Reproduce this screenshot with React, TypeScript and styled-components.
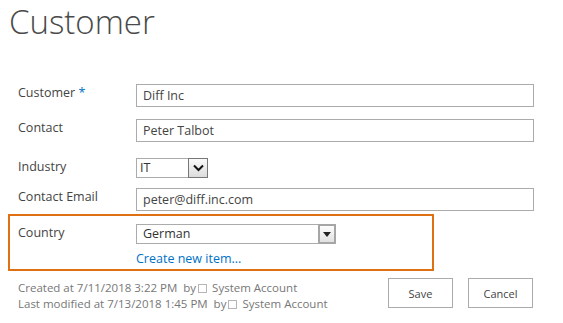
import styled, { createGlobalStyle } from 'styled-components';

const GlobalStyle = createGlobalStyle`
  body {
    margin: 0;
    background: #fff;
    font-family: 'Open Sans', 'Liberation Sans', sans-serif;
  }
`;

const Page = styled.div`
  width: 563px;
  height: 323px;
  overflow: hidden;
`;

const Title = styled.h1`
  margin: 0;
  padding: 0 0 0 9px;
  font-size: 33px;
  font-weight: 300;
  line-height: 44px;
  color: #4a4a4a;
`;

const Form = styled.div`
  padding-top: 40px;
`;

const Row = styled.div<{ gap?: number }>`
  display: flex;
  align-items: flex-start;
  padding-left: 18px;
  margin-bottom: ${(p) => p.gap ?? 12}px;
`;

const Label = styled.div`
  width: 118px;
  flex-shrink: 0;
  font-size: 12.5px;
  line-height: 18px;
  color: #444;
`;

const Star = styled.span`
  color: #0072c6;
`;

const TextBox = styled.div`
  box-sizing: border-box;
  width: 398px;
  height: 23px;
  border: 1px solid #ababab;
  padding: 0 6px;
  font-size: 12.5px;
  line-height: 21px;
  color: #444;
`;

const Select = styled.div<{ w: number }>`
  display: flex;
  box-sizing: border-box;
  width: ${(p) => p.w}px;
  height: 20px;
  border: 1px solid #ababab;
  font-size: 12.5px;
  line-height: 18px;
  color: #333;
`;

const SelectValue = styled.div<{ inset?: number }>`
  flex: 1;
  padding-left: ${(p) => p.inset ?? 3}px;
`;

const ClassicArrow = styled.div`
  box-sizing: border-box;
  width: 20px;
  height: 20px;
  margin: -1px -1px 0 0;
  border: 1px solid #777;
  background: linear-gradient(#fafafa, #dcdcdc);
  display: flex;
  align-items: center;
  justify-content: center;
`;

const DropArrow = styled.div`
  box-sizing: border-box;
  width: 18px;
  height: 20px;
  margin: -1px -1px 0 0;
  border: 2px solid #a6a6a6;
  background: linear-gradient(#fdfdfd, #e1e1e1);
  display: flex;
  align-items: center;
  justify-content: center;
`;

const Highlight = styled.div`
  box-sizing: border-box;
  width: 426px;
  height: 57px;
  margin-left: 8px;
  border: 2px solid #e07014;
  padding: 8px 0 0 8px;
  display: flex;
`;

const Stack = styled.div`
  display: flex;
  flex-direction: column;
`;

const Link = styled.a`
  margin-top: 6px;
  font-size: 12.5px;
  line-height: 17px;
  color: #0072c6;
  text-decoration: none;
`;

const Footer = styled.div`
  display: flex;
  justify-content: space-between;
  align-items: flex-start;
  padding: 7px 30px 0 18px;
`;

const Meta = styled.div`
  font-size: 11.5px;
  line-height: 16px;
  color: #777;
  padding-top: 2px;
`;

const Presence = styled.span`
  display: inline-block;
  box-sizing: border-box;
  width: 9px;
  height: 9px;
  margin: 0 5px 0 2px;
  border: 1px solid #b5b5b5;
  vertical-align: -1px;
`;

const Buttons = styled.div`
  display: flex;
  gap: 15px;
`;

const Button = styled.button`
  box-sizing: border-box;
  width: 65px;
  height: 30px;
  border: 1px solid #ababab;
  background: #fff;
  font-family: inherit;
  font-size: 11px;
  color: #444;
  padding: 0;
`;

export default function App() {
  return (
    <Page>
      <GlobalStyle />
      <Title>Customer</Title>
      <Form>
        <Row>
          <Label>
            Customer <Star>*</Star>
          </Label>
          <TextBox>Diff Inc</TextBox>
        </Row>
        <Row gap={16}>
          <Label>Contact</Label>
          <TextBox>Peter Talbot</TextBox>
        </Row>
        <Row gap={10}>
          <Label>Industry</Label>
          <Select w={72}>
            <SelectValue>IT</SelectValue>
            <ClassicArrow>
              <svg width="11" height="8" viewBox="0 0 11 8">
                <path d="M1 1.5 L5.5 6 L10 1.5" fill="none" stroke="#111" strokeWidth="2" />
              </svg>
            </ClassicArrow>
          </Select>
        </Row>
        <Row gap={3}>
          <Label>Contact Email</Label>
          <TextBox>peter@diff.inc.com</TextBox>
        </Row>
        <Highlight>
          <Label>Country</Label>
          <Stack>
            <Select w={200}>
              <SelectValue inset={6}>German</SelectValue>
              <DropArrow>
                <svg width="8" height="5" viewBox="0 0 8 5">
                  <path d="M0 0 H8 L4 5 Z" fill="#222" />
                </svg>
              </DropArrow>
            </Select>
            <Link href="#">Create new item...</Link>
          </Stack>
        </Highlight>
        <Footer>
          <Meta>
            <div>
              Created at 7/11/2018 3:22 PM&nbsp; by<Presence />
              System Account
            </div>
            <div>
              Last modified at 7/13/2018 1:45 PM&nbsp; by<Presence />
              System Account
            </div>
          </Meta>
          <Buttons>
            <Button>Save</Button>
            <Button>Cancel</Button>
          </Buttons>
        </Footer>
      </Form>
    </Page>
  );
}
